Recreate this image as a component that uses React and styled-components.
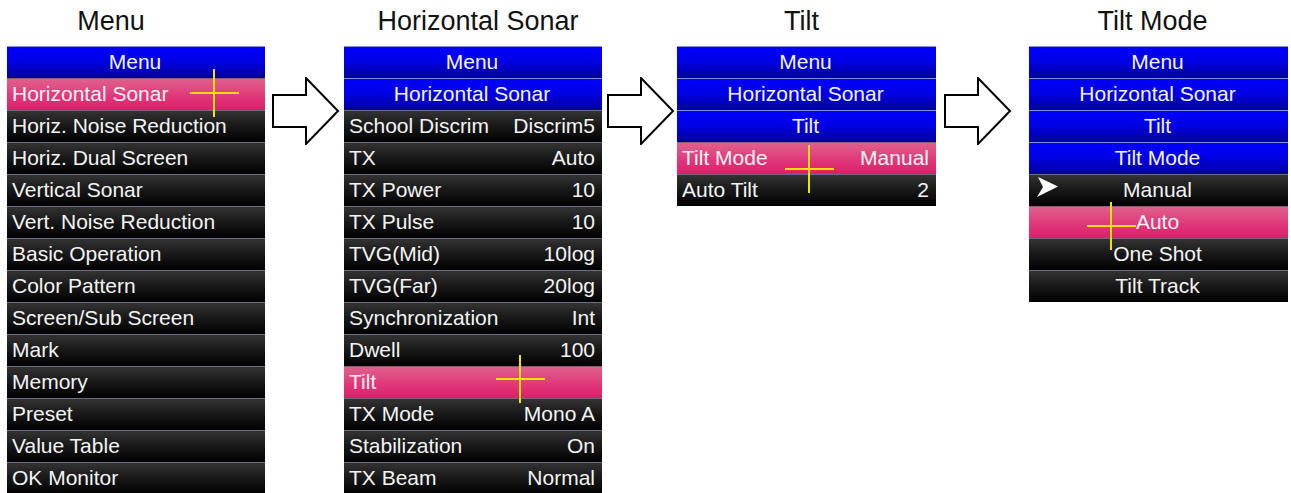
import React from 'react'
import styled, { createGlobalStyle, css } from 'styled-components'

const GlobalStyle = createGlobalStyle`
  html, body {
    margin: 0;
    padding: 0;
    background: #ffffff;
  }
  body {
    font-family: 'Liberation Sans', Arial, sans-serif;
  }
`

const Page = styled.div`
  display: flex;
  flex-direction: row;
  align-items: flex-start;
  width: 1291px;
  height: 493px;
  overflow: hidden;
  padding-left: 7px;
  box-sizing: border-box;
`

const Column = styled.div`
  display: flex;
  flex-direction: column;
  width: ${p => p.$width}px;
  flex-shrink: 0;
`

const Title = styled.div`
  height: 46px;
  box-sizing: border-box;
  padding-top: 6px;
  font-size: 27px;
  line-height: 30px;
  color: #111;
  text-align: center;
  white-space: nowrap;
  padding-left: ${p => (p.$shift > 0 ? p.$shift * 2 : 0)}px;
  padding-right: ${p => (p.$shift < 0 ? -p.$shift * 2 : 0)}px;
`

const Panel = styled.div`
  display: flex;
  flex-direction: column;
`

const variants = {
  dark: css`
    border-top: 1px solid #6c6c8a;
    background: linear-gradient(#333333, #1a1a1a 45%, #000000);
  `,
  active: css`
    border-top: 1px solid #8a6078;
    background: linear-gradient(#e0608c, #e0387a 55%, #de1e68);
  `,
  head: css`
    border-top: 1px solid #8c8cd8;
    background: linear-gradient(#0000ff, #0000e6 45%, #00009c);
  `
}

const Row = styled.div`
  position: relative;
  display: flex;
  align-items: flex-start;
  justify-content: ${p => (p.$center ? 'center' : 'space-between')};
  height: 32px;
  box-sizing: border-box;
  padding: 0 7px 0 5px;
  font-size: 21px;
  line-height: 29px;
  color: #f4f4f4;
  white-space: nowrap;
  ${p => variants[p.$kind || 'dark']}
`

const Value = styled.span`
  text-align: right;
`

const Marker = styled.svg`
  position: absolute;
  left: 8px;
  top: 2px;
  width: 22px;
  height: 21px;
`

const Cursor = styled.div`
  position: absolute;
  z-index: 3;
  left: ${p => p.$x - 24}px;
  top: ${p => p.$y - 24}px;
  width: 49px;
  height: 48px;
  pointer-events: none;

  &::before,
  &::after {
    content: '';
    position: absolute;
    background: #f2e400;
  }
  &::before {
    left: 0;
    top: 23px;
    width: 49px;
    height: 2px;
  }
  &::after {
    left: 23px;
    top: 0;
    width: 2px;
    height: 48px;
  }
`

const ArrowSlot = styled.div`
  width: ${p => p.$width}px;
  flex-shrink: 0;
  box-sizing: border-box;
  padding-left: ${p => p.$inset}px;
  padding-top: 77px;
`

const Arrow = () => (
  <svg width="68" height="68" viewBox="0 0 68 68">
    <polygon
      points="1,18 34,18 34,1 66,34 34,67 34,50 1,50"
      fill="#ffffff"
      stroke="#000000"
      strokeWidth="2"
      strokeLinejoin="miter"
    />
  </svg>
)

const Item = ({ label, value, kind, center, cursor, marker }) => (
  <Row $kind={kind} $center={center}>
    {marker && (
      <Marker viewBox="0 0 22 21">
        <polygon points="1,0 21,9.5 0,20 6,10" fill="#ffffff" />
      </Marker>
    )}
    <span>{label}</span>
    {value !== undefined && <Value>{value}</Value>}
    {cursor && <Cursor $x={cursor[0]} $y={cursor[1]} />}
  </Row>
)

const Head = ({ children }) => (
  <Row $kind="head" $center>
    {children}
  </Row>
)

const mainMenu = [
  'Horiz. Noise Reduction',
  'Horiz. Dual Screen',
  'Vertical Sonar',
  'Vert. Noise Reduction',
  'Basic Operation',
  'Color Pattern',
  'Screen/Sub Screen',
  'Mark',
  'Memory',
  'Preset',
  'Value Table',
  'OK Monitor'
]

const sonarMenu = [
  ['School Discrim', 'Discrim5'],
  ['TX', 'Auto'],
  ['TX Power', '10'],
  ['TX Pulse', '10'],
  ['TVG(Mid)', '10log'],
  ['TVG(Far)', '20log'],
  ['Synchronization', 'Int'],
  ['Dwell', '100']
]

const sonarTail = [
  ['TX Mode', 'Mono A'],
  ['Stabilization', 'On'],
  ['TX Beam', 'Normal']
]

const App = () => (
  <>
    <GlobalStyle />
    <Page>
      <Column $width={258}>
        <Title $shift={-25}>Menu</Title>
        <Panel>
          <Head>Menu</Head>
          <Item label="Horizontal Sonar" kind="active" cursor={[207, 14]} />
          {mainMenu.map(label => (
            <Item key={label} label={label} />
          ))}
        </Panel>
      </Column>

      <ArrowSlot $width={79} $inset={7}>
        <Arrow />
      </ArrowSlot>

      <Column $width={258}>
        <Title $shift={5}>Horizontal Sonar</Title>
        <Panel>
          <Head>Menu</Head>
          <Head>Horizontal Sonar</Head>
          {sonarMenu.map(([label, value]) => (
            <Item key={label} label={label} value={value} />
          ))}
          <Item label="Tilt" kind="active" cursor={[176, 12]} />
          {sonarTail.map(([label, value]) => (
            <Item key={label} label={label} value={value} />
          ))}
        </Panel>
      </Column>

      <ArrowSlot $width={75} $inset={5}>
        <Arrow />
      </ArrowSlot>

      <Column $width={259}>
        <Title $shift={-5}>Tilt</Title>
        <Panel>
          <Head>Menu</Head>
          <Head>Horizontal Sonar</Head>
          <Head>Tilt</Head>
          <Item label="Tilt Mode" value="Manual" kind="active" cursor={[132, 26]} />
          <Item label="Auto Tilt" value="2" />
        </Panel>
      </Column>

      <ArrowSlot $width={93} $inset={8}>
        <Arrow />
      </ArrowSlot>

      <Column $width={259}>
        <Title $shift={-6}>Tilt Mode</Title>
        <Panel>
          <Head>Menu</Head>
          <Head>Horizontal Sonar</Head>
          <Head>Tilt</Head>
          <Head>Tilt Mode</Head>
          <Item label="Manual" center marker />
          <Item label="Auto" kind="active" center cursor={[82, 19]} />
          <Item label="One Shot" center />
          <Item label="Tilt Track" center />
        </Panel>
      </Column>
    </Page>
  </>
)

export default App
